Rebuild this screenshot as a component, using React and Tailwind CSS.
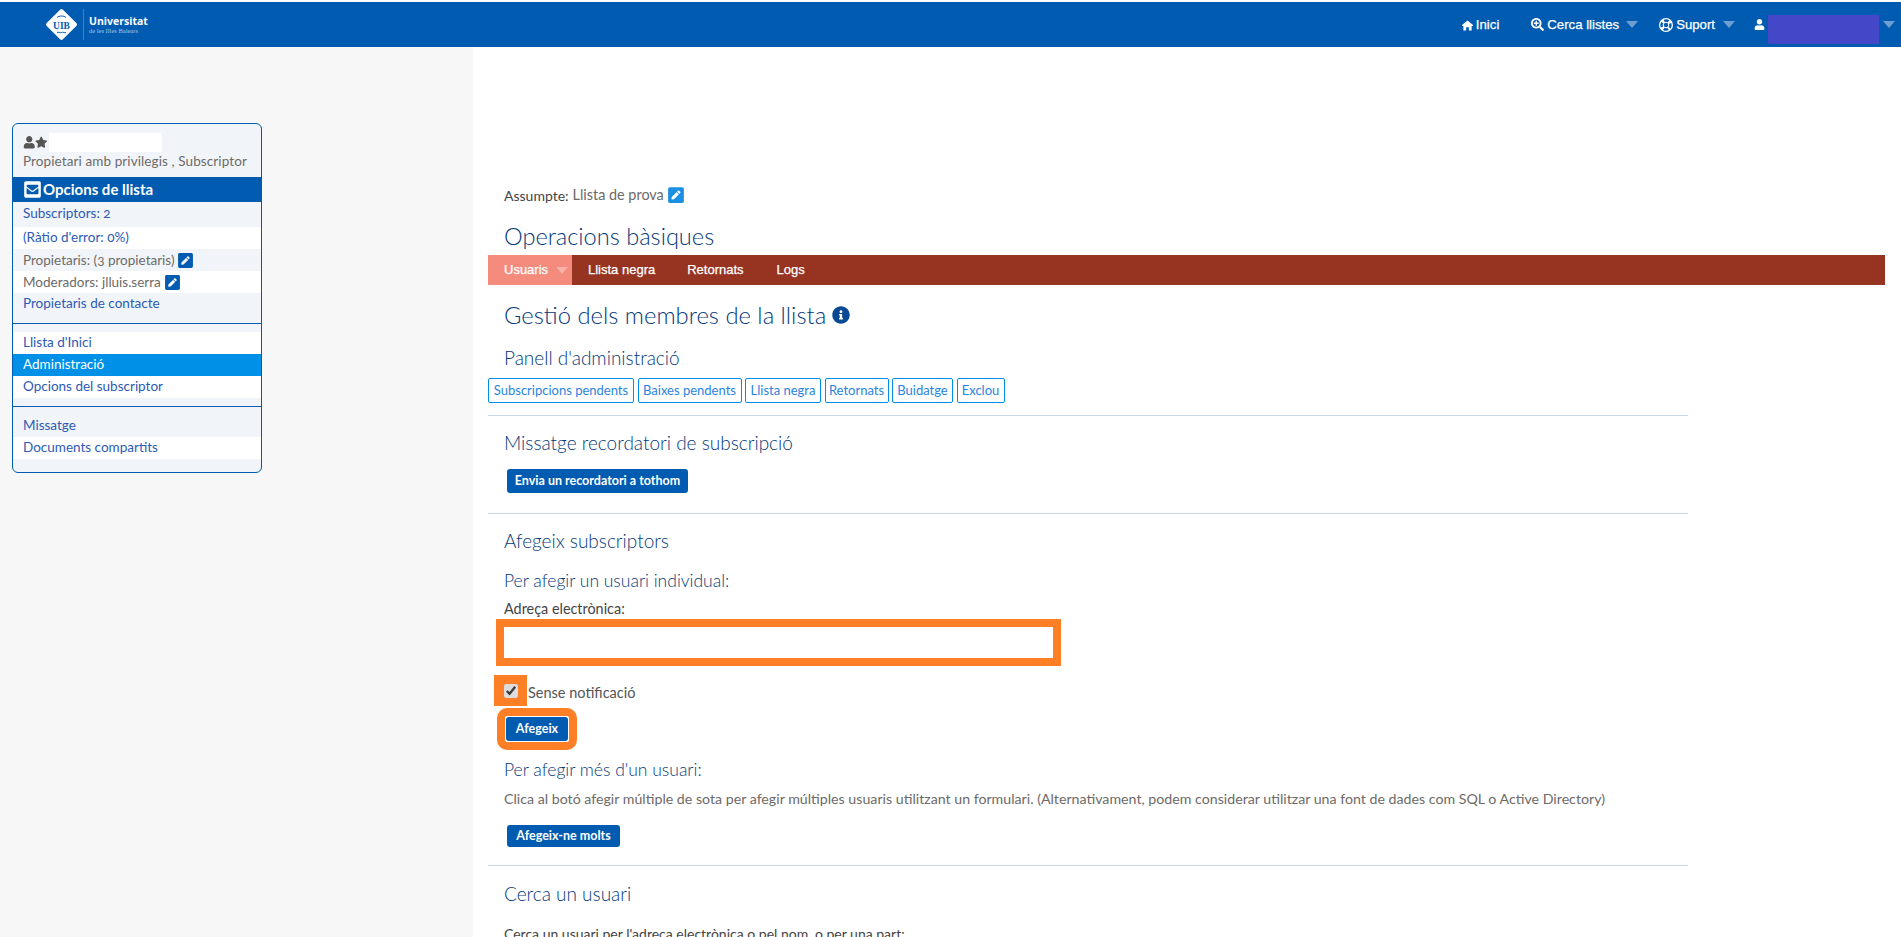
import { FaUser, FaStar, FaEnvelopeSquare, FaPenSquare, FaInfoCircle, FaSearchPlus } from 'react-icons/fa';

const raleway = "font-['Lato','Open_Sans',sans-serif]";
const navText = '[-webkit-text-stroke:0.25px_white]';

function Caret({ color = 'border-t-[#6f9fd2]', className = '' }) {
  return <span className={`inline-block h-0 w-0 border-x-[6px] border-t-[7px] border-x-transparent ${color} ${className}`} />;
}

function HomeIcon() {
  return (
    <svg width="11" height="11" viewBox="0 0 12 11" className="mt-[2px]">
      <path d="M6 0 L12 5 V6 H10.500 V11 H7.500 V7.500 H4.500 V11 H1.500 V6 H0 V5 Z" fill="#fff" />
    </svg>
  );
}

function RingIcon() {
  return (
    <svg width="14" height="14" viewBox="0 0 14 14">
      <circle cx="7" cy="7" r="7" fill="#fff" />
      <circle cx="7" cy="7" r="4.500" fill="none" stroke="#005bb1" strokeWidth="2.400" strokeDasharray="4.400 2.670" strokeDashoffset="-1.330" transform="rotate(45 7 7)" />
      <circle cx="7" cy="7" r="2.200" fill="#005bb1" />
    </svg>
  );
}

function Logo() {
  return (
    <div className="flex items-center">
      <svg width="33" height="33" viewBox="0 0 33 33" className="ml-[45px]">
        <rect x="5" y="5" width="23" height="23" rx="2" fill="#fff" transform="rotate(45 16.5 16.5)" />
        <path d="M12 9.500c2-2 7-2 9 0" stroke="#005bb1" strokeWidth="1" fill="none" />
        <path d="M12 24.500c1.500-1 3 1 4.500 0s3 1 4.500 0" stroke="#005bb1" strokeWidth="1" fill="none" />
        <text x="16.500" y="20.500" textAnchor="middle" fontSize="9.500" fontWeight="700" fill="#005bb1" fontFamily="Liberation Serif, serif">UIB</text>
      </svg>
      <span className="ml-[5px] h-[31px] w-px bg-[#3f82c4]" />
      <div className="ml-[5px] flex flex-col text-white">
        <span className="font-['Open_Sans',sans-serif] text-[10.5px] leading-[11px] font-bold">Universitat</span>
        <span className="font-['Liberation_Serif',serif] text-[6.500px] leading-[7px] text-[#a9c8e8]">de les Illes Balears</span>
      </div>
    </div>
  );
}

function TopNav() {
  return (
    <header className="mt-[2px] flex h-[45px] items-center justify-between bg-[#005bb1] font-['Liberation_Sans',sans-serif] text-[13.200px] text-white">
      <Logo />
      <nav className={`flex h-full items-center ${navText}`}>
        <HomeIcon />
        <span className="ml-[3px]">Inici</span>
        <FaSearchPlus className="ml-[32px] text-[13px]" />
        <span className="ml-[3px]">Cerca llistes</span>
        <Caret className="ml-[7px]" />
        <span className="ml-[21px]"><RingIcon /></span>
        <span className="ml-[3px]">Suport</span>
        <Caret className="ml-[8px]" />
        <FaUser className="ml-[19px] text-[11px]" />
        <span className="mb-[3px] ml-[3px] h-[29px] w-[111px] self-end bg-[#4347c8]" />
        <Caret className="mr-[6px] ml-[4px]" />
      </nav>
    </header>
  );
}

function Row({ children, white, active, link = true, className = '' }) {
  const bg = active ? 'bg-[#0090e8] text-white' : white ? 'bg-white' : 'bg-[#f1f5f9]';
  const color = active ? '' : link ? 'text-[#2c5ab5]' : 'text-[#6d6a68]';
  return <div className={`flex h-[22px] items-center pl-[10px] text-[13.500px] ${bg} ${color} ${className}`}>{children}</div>;
}

function Sidebar() {
  return (
    <aside className="h-full w-[473px] shrink-0 bg-[#f7f7f7] pt-[76px] pl-[12px]">
      <div className={`w-[250px] overflow-hidden rounded-[6px] border border-[#005bb1] bg-[#f1f5f9] ${raleway}`}>
        <div className="h-[53px] pt-[9px] pl-[10px] text-[13.500px] text-[#6d6a68]">
          <div className="flex h-[19px] items-center text-[12.500px] text-[#555]">
            <FaUser />
            <FaStar className="-ml-[1px]" />
            <span className="ml-[2px] h-[19px] w-[113px] bg-white" />
          </div>
          <div className="mt-[1px] leading-[17px] tracking-[0.1px]">Propietari amb privilegis , Subscriptor</div>
        </div>
        <div className="flex h-[25px] items-center bg-[#005bb1] pl-[10px] text-[15px] font-bold text-white">
          <FaEnvelopeSquare className="mr-[1px] text-[19px]" />
          Opcions de llista
        </div>
        <Row className="h-[25px] pb-[2px]"><span className="oldstyle-nums">Subscriptors: 2</span></Row>
        <Row white className="pb-[1px]"><span className="oldstyle-nums">(Ràtio d'error: 0%)</span></Row>
        <Row link={false}>
          <span className="oldstyle-nums">Propietaris: (3 propietaris)</span>
          <FaPenSquare className="ml-[2px] text-[17px] text-[#005bb1]" />
        </Row>
        <Row white link={false}>
          Moderadors: jlluis.serra
          <FaPenSquare className="ml-[3px] text-[17px] text-[#005bb1]" />
        </Row>
        <Row className="!items-start">Propietaris de contacte</Row>
        <div className="h-[8px]" />
        <div className="border-t border-[#005bb1] pt-[8px]">
          <Row white className="pb-[2px]">Llista d'Inici</Row>
          <Row active className="pb-[2px]">Administració</Row>
          <Row white className="pb-[2px]">Opcions del subscriptor</Row>
        </div>
        <div className="mt-[8px] border-t border-[#005bb1] pt-[8px]">
          <Row className="pb-[1px]">Missatge</Row>
          <Row white className="pb-[1px]">Documents compartits</Row>
          <div className="h-[13px]" />
        </div>
      </div>
    </aside>
  );
}

function SolidButton({ children, className = '' }) {
  return <button className={`flex items-center justify-center rounded-[3px] bg-[#005bb1] text-[12.500px] font-bold whitespace-nowrap text-white ${className}`}>{children}</button>;
}

function H({ children, className = '' }) {
  return <h3 className={`pl-[16px] text-[19px] leading-[22px] font-light text-[#04397a] ${className}`}>{children}</h3>;
}

const adminLinks = [
  ['Subscripcions pendents', 'w-[146px]'],
  ['Baixes pendents', 'w-[104px]'],
  ['Llista negra', 'w-[76px]'],
  ['Retornats', 'w-[64px]'],
  ['Buidatge', 'w-[61px]'],
  ['Exclou', 'w-[48px]'],
];

function Main() {
  return (
    <main className={`flex-1 pt-[139px] pl-[15px] text-[14px] text-[#6d6a68] ${raleway}`}>
      <div className="flex h-[18px] items-center pl-[16px]">
        <span className="text-[#444]">Assumpte:</span>
        <span className="ml-[4px] text-[14.400px]">Llista de prova</span>
        <FaPenSquare className="ml-[3px] text-[18px] text-[#1a8fe3]" />
      </div>
      <h2 className="mt-[18px] pl-[16px] text-[23.600px] leading-[28px] font-light text-[#04397a]">Operacions bàsiques</h2>
      <div className={`mt-[5px] flex h-[30px] w-[1397px] items-center bg-[#963321] font-['Liberation_Sans',sans-serif] text-[13px] text-white ${navText}`}>
        <span className="flex h-full w-[84px] items-center bg-[#f58b7c] pl-[16px]">
          Usuaris
          <Caret color="border-t-[#fab1a7]" className="ml-[8px]" />
        </span>
        <span className="ml-[16px]">Llista negra</span>
        <span className="ml-[32px]">Retornats</span>
        <span className="ml-[33px]">Logs</span>
      </div>
      <h2 className="mt-[16px] flex items-center pl-[16px] text-[23.800px] leading-[28px] font-light text-[#04397a]">
        Gestió dels membres de la llista
        <FaInfoCircle className="ml-[6px] text-[18px] text-[#0a4a94]" />
      </h2>
      <H className="mt-[18px]">Panell d'administració</H>
      <div className="mt-[9px] flex gap-[3.500px]">
        {adminLinks.map(([label, w]) => (
          <button key={label} className={`flex h-[25px] items-center justify-center rounded-[2px] border border-[#0090e8] text-[13px] whitespace-nowrap text-[#2b83e0] ${w}`}>{label}</button>
        ))}
      </div>
      <hr className="mt-[12px] w-[1200px] border-[#c8d6e5]" />
      <H className="mt-[16px]">Missatge recordatori de subscripció</H>
      <SolidButton className="mt-[15px] ml-[19px] h-[24px] w-[181px]">Envia un recordatori a tothom</SolidButton>
      <hr className="mt-[20px] w-[1200px] border-[#c8d6e5]" />
      <H className="mt-[16px]">Afegeix subscriptors</H>
      <H className="mt-[18px] !text-[17.500px]">Per afegir un usuari individual:</H>
      <div className="mt-[9px] flex h-[16px] items-center pl-[16px] text-[14.400px] text-[#444]">Adreça electrònica:</div>
      <input className="mt-[2px] ml-[8px] block h-[47px] w-[565px] border-[8px] border-[#ff7f27] bg-white outline-none" />
      <div className="mt-[9px] flex items-center">
        <span className="ml-[6px] flex h-[31px] w-[33px] items-center justify-center bg-[#ff7f27]">
          <input type="checkbox" defaultChecked readOnly className="h-[14px] w-[16px] accent-[#dcdcdc]" />
        </span>
        <span className="mt-[5px] ml-[1px] text-[14.500px] text-[#555]">Sense notificació</span>
      </div>
      <span className="mt-[2px] ml-[9px] block w-[80px] rounded-[10px] border-[8px] border-[#ff7f27] bg-white py-px pl-px">
        <SolidButton className="h-[24px] w-[62px]">Afegeix</SolidButton>
      </span>
      <H className="mt-[9px] !text-[17.500px]">Per afegir més d'un usuari:</H>
      <p className="mt-[9px] pl-[16px] text-[14.200px] leading-[18px]">Clica al botó afegir múltiple de sota per afegir múltiples usuaris utilitzant un formulari. (Alternativament, podem considerar utilitzar una font de dades com SQL o Active Directory)</p>
      <SolidButton className="mt-[17px] ml-[19px] h-[22px] w-[113px]">Afegeix-ne molts</SolidButton>
      <hr className="mt-[18px] w-[1200px] border-[#c8d6e5]" />
      <H className="mt-[17px]">Cerca un usuari</H>
      <p className="mt-[20px] pl-[16px] leading-[18px] text-[#444]">Cerca un usuari per l'adreça electrònica o pel nom, o per una part:</p>
    </main>
  );
}

export default function App() {
  return (
    <div className="flex h-screen flex-col overflow-hidden bg-white">
      <TopNav />
      <div className="flex min-h-0 flex-1">
        <Sidebar />
        <Main />
      </div>
    </div>
  );
}
